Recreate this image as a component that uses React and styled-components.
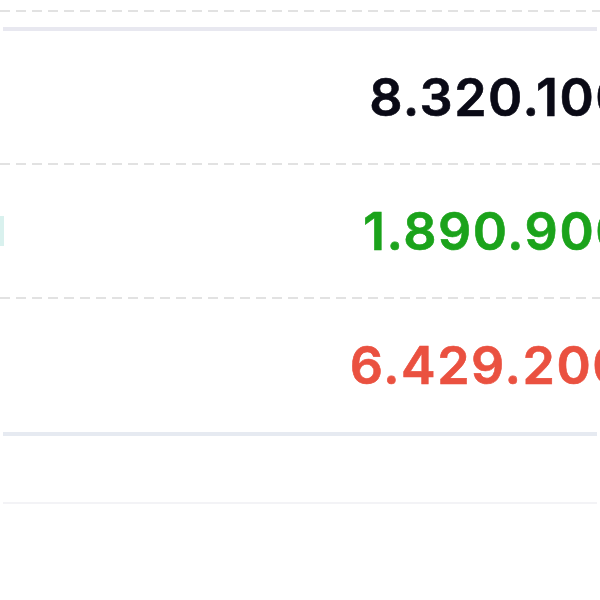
import React from "react";
import styled, { createGlobalStyle } from "styled-components";

const GlobalStyle = createGlobalStyle`
  html, body {
    margin: 0;
    padding: 0;
    background: #ffffff;
    overflow: hidden;
  }
  body {
    font-family: Inter, "Liberation Sans", Arial, sans-serif;
  }
`;

const Page = styled.div`
  width: 600px;
  height: 600px;
  overflow: hidden;
  background: #ffffff;
  padding-top: 10px;
  box-sizing: border-box;
`;

const DashedRule = styled.div`
  height: 2px;
  background: repeating-linear-gradient(
    to right,
    #e2e2e2 0 10px,
    transparent 10px 16px
  );
`;

const Table = styled.div`
  margin-top: 15px;
  width: 600px;
`;

const HeaderEdge = styled.div`
  height: 4px;
  margin: 0 3px;
  background: #e8e8f0;
`;

const Row = styled.div`
  display: flex;
  align-items: center;
  height: ${({ $last }) => ($last ? "133px" : "132px")};
  border-bottom: ${({ $last }) => ($last ? "4px solid #e6eaf1" : "none")};
  margin: ${({ $last }) => ($last ? "0 3px" : "0")};
`;

const LabelCell = styled.div`
  flex: 1;
  height: 100%;
  display: flex;
  align-items: center;
`;

const Sliver = styled.span`
  display: block;
  width: 4px;
  height: 30px;
  background: #d9f1ee;
`;

const ValueCell = styled.div`
  flex: none;
  width: 0;
  display: flex;
  justify-content: flex-end;
  white-space: nowrap;
  margin-right: -31px;
  font-size: 52px;
  font-weight: 600;
  letter-spacing: 1.5px;
  -webkit-text-stroke: 0.6px currentColor;
  color: ${({ $tone }) =>
    $tone === "up" ? "#1ba31b" : $tone === "down" ? "#ea5140" : "#0a0a16"};
`;

const FooterRule = styled.div`
  margin: 66px 3px 0;
  height: 2px;
  background: #f3f3f6;
`;

const rows = [
  { value: "8.320.100", tone: "total" },
  { value: "1.890.900", tone: "up", marker: true },
  { value: "6.429.200", tone: "down" },
];

export default function App() {
  return (
    <>
      <GlobalStyle />
      <Page>
        <DashedRule />
        <Table>
          <HeaderEdge />
          {rows.map((row, i) => (
            <React.Fragment key={row.value}>
              <Row $last={i === rows.length - 1}>
                <LabelCell>{row.marker && <Sliver />}</LabelCell>
                <ValueCell $tone={row.tone}>{row.value}</ValueCell>
              </Row>
              {i < rows.length - 1 && <DashedRule />}
            </React.Fragment>
          ))}
        </Table>
        <FooterRule />
      </Page>
    </>
  );
}
